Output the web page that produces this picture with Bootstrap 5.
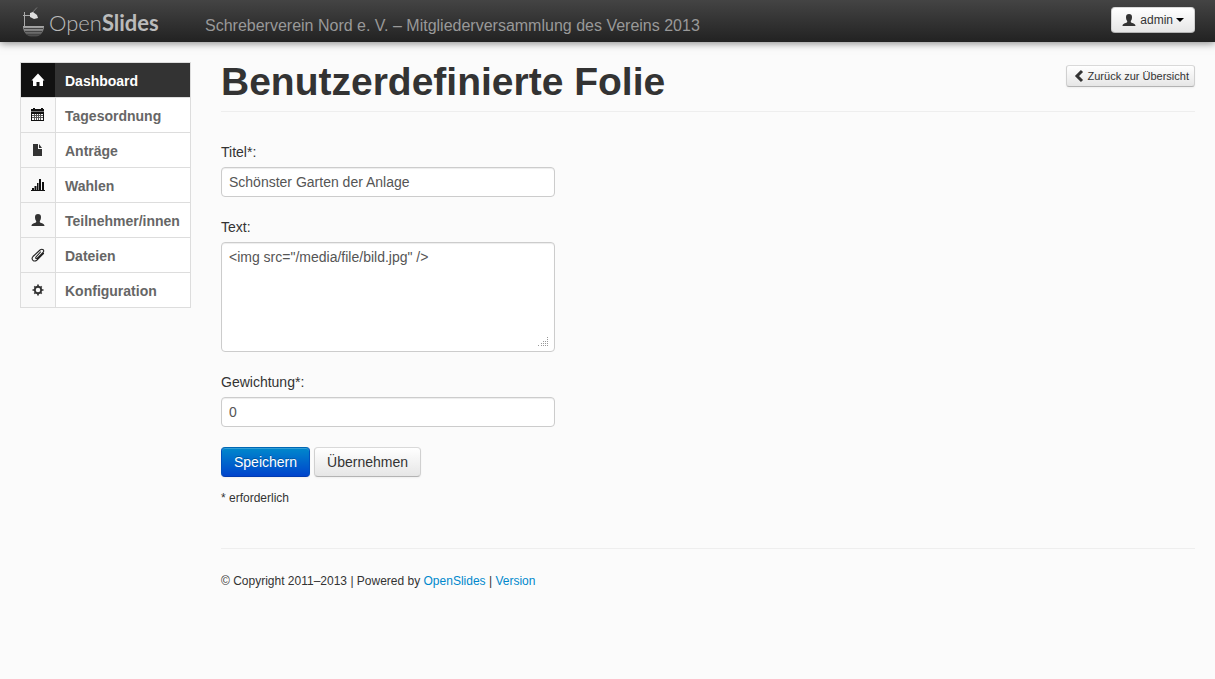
<!DOCTYPE html>
<html lang="de">
<head>
<meta charset="utf-8">
<meta name="viewport" content="width=device-width, initial-scale=1">
<title>Benutzerdefinierte Folie – OpenSlides</title>
<link href="https://cdn.jsdelivr.net/npm/bootstrap@5.3.0/dist/css/bootstrap.min.css" rel="stylesheet">
<style>
body { background: #fbfbfb; color: #333; font: 14px/20px "Liberation Sans", Arial, sans-serif; }
.topbar { height: 42px; padding: 0 20px; background: linear-gradient(#444, #222); box-shadow: 0 1px 8px rgba(0,0,0,.5); }
.brand-link { width: 185px; }
.brand-text { font: 300 22px/30px Lato, sans-serif; fill: #bbb; }
.event-title { color: #999; font-size: 16px; line-height: 20px; padding-top: 10px; }
.btn-soft, .btn-save { border-radius: 4px; font-size: 14px; line-height: 20px; padding: 4px 12px; box-shadow: inset 0 1px 0 rgba(255,255,255,.2), 0 1px 2px rgba(0,0,0,.05); }
.btn-soft { color: #333; background: linear-gradient(#fff, #e6e6e6); border: 1px solid #ccc; border-color: #d9d9d9 #d0d0d0 #b3b3b3; }
.btn-save { color: #fff; background: linear-gradient(#08c, #04c); border: 1px solid #0055b8; border-color: #0067b4 #0050bd #003ab0; text-shadow: 0 -1px 0 rgba(0,0,0,.25); }
.btn-user { font-size: 12px; line-height: 16px; padding: 4px 10px; margin-top: 7px; }
.btn-user::after { margin-left: 3px; border-width: 4px 4px 0; color: #000; }
.btn-tiny { font-size: 11px; line-height: 20px; padding: 0 5px; border-radius: 3px; gap: 2px; }
.page-body { padding: 20px; gap: 30px; }
.side-menu { width: 171px; border: 1px solid #ddd; }
.side-menu a { height: 35px; color: #666; font-weight: 700; background: #fff; border-bottom: 1px solid #ddd; }
.side-menu li:last-child a { height: 34px; border-bottom: 0; }
.side-menu .icon-cell { width: 35px; background: #f9f9f9; border-right: 1px solid #ddd; color: #222; }
.side-menu .label-cell { padding-left: 9px; padding-top: 1px; }
.side-menu a.active { background: #333; color: #fff; }
.side-menu a.active .icon-cell { background: #111; border-color: #333; color: #fff; }
.title-bar { padding-bottom: 9px; border-bottom: 1px solid #eee; margin-bottom: 30px; }
.title-bar h1 { font-size: 39px; line-height: 40px; font-weight: 700; }
.title-bar .btn { margin-top: 3px; }
.field { margin-bottom: 20px; max-width: 334px; }
.field label { margin-bottom: 5px; }
.field .form-control { color: #555; font-size: 14px; line-height: 20px; padding: 4px 7px; border: 1px solid #ccc; border-radius: 4px; min-height: 0; box-shadow: inset 0 1px 1px rgba(0,0,0,.075); }
.field textarea { display: block; resize: none; background: #fff url("data:image/svg+xml,%3Csvg xmlns='http://www.w3.org/2000/svg' width='10' height='10' fill='%23999'%3E%3Cpath d='M0 8h1v1H0zM3 8h1v1H3zM3 6h1v1H3zM5 8h1v1H5zM5 6h1v1H5zM5 4h1v1H5zM7 8h1v1H7zM7 6h1v1H7zM7 4h1v1H7zM9 8h1v1H9zM9 6h1v1H9zM9 4h1v1H9zM9 2h1v1H9zM9 0h1v1H9z'/%3E%3C/svg%3E") no-repeat right 6px bottom 4px; }
.fine { font-size: 12px; line-height: 20px; }
.required-note { padding-top: 11px; }
.page-foot { margin-top: 40px; padding-top: 22px; border-top: 1px solid #eee; }
.page-foot a { color: #08c; }
</style>
</head>
<body>
<header class="topbar d-flex align-items-start">
  <a href="#" class="brand-link flex-shrink-0 text-decoration-none" aria-label="OpenSlides">
    <svg class="d-block" width="160" height="42" viewBox="0 0 160 42" aria-hidden="true">
      <defs><linearGradient id="bowl" x2="0" y2="1"><stop offset="0" stop-color="#aaa"/><stop offset="1" stop-color="#444"/></linearGradient></defs>
      <path d="M4.500 12v14M3 15.500h9" stroke="#aaa" fill="none"/>
      <path d="M11 14l6-6.500" stroke="#777" fill="none"/>
      <path d="M10 13l3-1 4 3 1 3-4 1-4-2z" fill="#ddd"/>
      <path d="M3 26h21c0 6-4 10.500-8 10.500h-5C7 36.500 3 32 3 26z" fill="url(#bowl)"/>
      <path d="M4 28.500h19M5 31.500h17M7 34.500h13" stroke="#444"/>
      <text class="brand-text" x="29" y="31"><tspan>Open</tspan><tspan font-weight="700">Slides</tspan></text>
    </svg>
  </a>
  <div class="event-title flex-grow-1 align-self-center">Schreberverein Nord e. V. – Mitgliederversammlung des Vereins 2013</div>
  <button type="button" class="btn btn-soft btn-user dropdown-toggle d-flex align-items-center" data-bs-toggle="dropdown">
    <svg class="me-1" width="14" height="14" viewBox="0 0 14 14" fill="#333" aria-hidden="true"><path d="M7 1c2 0 3 1 3 3 0 2-.5 3-1.200 4v1c0 1 4.700 1 4.700 4H.5c0-3 4.700-3 4.700-4V8C4.500 7 4 6 4 4c0-2 1-3 3-3z"/></svg>admin
  </button>
</header>

<div class="page-body d-flex align-items-start">
  <nav class="side-menu flex-shrink-0">
    <ul class="list-unstyled mb-0">
      <li><a href="#" class="active d-flex align-items-stretch text-decoration-none"><span class="icon-cell d-flex align-items-center justify-content-center"><svg width="14" height="14" viewBox="0 0 14 14" fill="currentColor"><path d="M7 .5L13.500 7.500H12V13H8.500V9h-3v4H2V7.500H.5z"/></svg></span><span class="label-cell d-flex align-items-center">Dashboard</span></a></li>
      <li><a href="#" class="d-flex align-items-stretch text-decoration-none"><span class="icon-cell d-flex align-items-center justify-content-center"><svg width="14" height="14" viewBox="0 0 14 14" fill="#111" shape-rendering="crispEdges"><path d="M2 0h2v1h6V0h2v1h1v2H0V1h2z"/><path d="M0 3h13v1H0z" fill="#777"/><path fill-rule="evenodd" d="M0 4h13v9H0zM1 6v6h11V6z"/><path d="M3 6h1v6H3zM5 6h1v6H5zM7 6h1v6H7zM9 6h1v6H9zM1 7h11v1H1zM1 9h11v1H1z" fill="#555"/></svg></span><span class="label-cell d-flex align-items-center">Tagesordnung</span></a></li>
      <li><a href="#" class="d-flex align-items-stretch text-decoration-none"><span class="icon-cell d-flex align-items-center justify-content-center"><svg width="14" height="14" viewBox="0 0 14 14" fill="#333"><path d="M2 1h5v5h4v7H2zM8 1l3 4H8z"/></svg></span><span class="label-cell d-flex align-items-center">Anträge</span></a></li>
      <li><a href="#" class="d-flex align-items-stretch text-decoration-none"><span class="icon-cell d-flex align-items-center justify-content-center"><svg width="14" height="14" viewBox="0 0 14 14" fill="#111"><path d="M0 12h14v1H0zM1 10h2v2H1zM3.500 8h2v4h-2zM6 5h1.500v7H6zM8 1h2v11H8zM11 4h2v8h-2z"/></svg></span><span class="label-cell d-flex align-items-center">Wahlen</span></a></li>
      <li><a href="#" class="d-flex align-items-stretch text-decoration-none"><span class="icon-cell d-flex align-items-center justify-content-center"><svg width="14" height="14" viewBox="0 0 14 14" fill="#333"><path d="M7 1c2 0 3 1 3 3 0 2-.5 3-1.200 4v1c0 1 4.700 1 4.700 4H.5c0-3 4.700-3 4.700-4V8C4.500 7 4 6 4 4c0-2 1-3 3-3z"/></svg></span><span class="label-cell d-flex align-items-center">Teilnehmer/innen</span></a></li>
      <li><a href="#" class="d-flex align-items-stretch text-decoration-none"><span class="icon-cell d-flex align-items-center justify-content-center"><svg width="14" height="14" viewBox="0 0 14 14" fill="none" stroke="#222" stroke-width="1.100" stroke-linecap="round"><path d="M9.500 4L5 9c-1 1.500.5 2 1.500 1L12 4.500c2-2-.5-4.500-3-2.500L2 8.500C-.5 11.500 3 14.500 6 12l6.500-6.500"/></svg></span><span class="label-cell d-flex align-items-center">Dateien</span></a></li>
      <li><a href="#" class="d-flex align-items-stretch text-decoration-none"><span class="icon-cell d-flex align-items-center justify-content-center"><svg width="14" height="14" viewBox="0 0 14 14" fill="none" stroke="#333"><circle cx="7" cy="7" r="3.200" stroke-width="1.900"/><path d="M7 1.500v2M7 10.500v2M1.500 7h2M10.500 7h2M3.300 3.300l1 1M9.700 9.700l1 1M3.300 10.700l1-1M9.700 4.300l1-1" stroke-width="1.700"/></svg></span><span class="label-cell d-flex align-items-center">Konfiguration</span></a></li>
    </ul>
  </nav>

  <div class="flex-grow-1">
    <main>
      <div class="title-bar d-flex justify-content-between align-items-start">
        <h1 class="mb-0">Benutzerdefinierte Folie</h1>
        <a href="#" class="btn btn-soft btn-tiny d-flex align-items-center"><svg width="14" height="14" viewBox="0 0 14 14" fill="none" stroke="#333" stroke-width="3" aria-hidden="true"><path d="M10 2L5 7l5 5"/></svg>Zurück zur Übersicht</a>
      </div>
      <form>
        <div class="field"><label for="title" class="d-block">Titel*:</label><input id="title" type="text" class="form-control" value="Schönster Garten der Anlage"></div>
        <div class="field"><label for="text" class="d-block">Text:</label><textarea id="text" class="form-control" rows="5">&lt;img src="/media/file/bild.jpg" /&gt;</textarea></div>
        <div class="field"><label for="weight" class="d-block">Gewichtung*:</label><input id="weight" type="text" class="form-control" value="0"></div>
        <div class="d-flex gap-1">
          <button type="submit" class="btn btn-save">Speichern</button>
          <button type="submit" class="btn btn-soft">Übernehmen</button>
        </div>
        <div class="fine required-note">* erforderlich</div>
      </form>
    </main>
    <footer class="page-foot fine">© Copyright 2011–2013 | Powered by <a href="#" class="text-decoration-none">OpenSlides</a> | <a href="#" class="text-decoration-none">Version</a></footer>
  </div>
</div>
<script src="https://cdn.jsdelivr.net/npm/bootstrap@5.3.0/dist/js/bootstrap.bundle.min.js"></script>
</body>
</html>
